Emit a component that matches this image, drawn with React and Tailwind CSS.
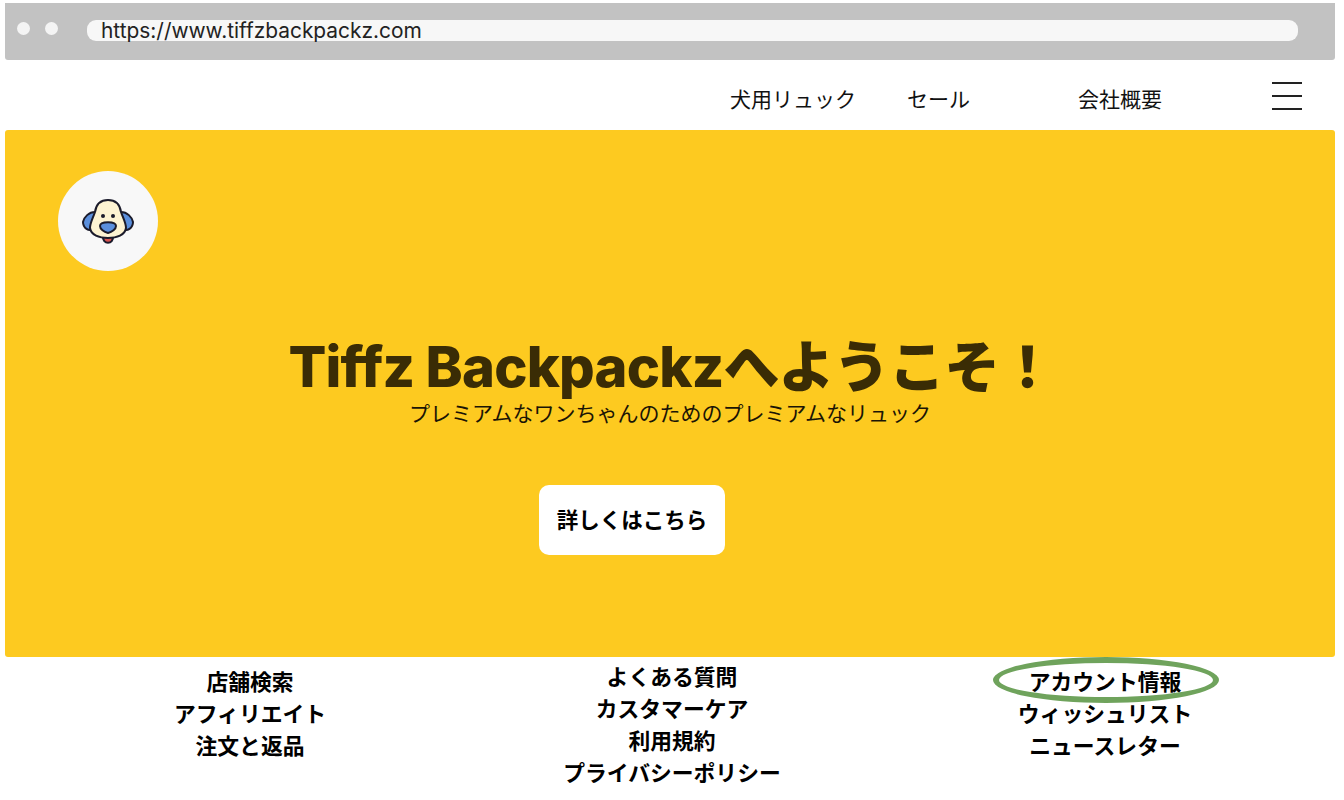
const footerColumns = [
  { width: "ml-[100px]", top: "pt-[9px]", links: ["店舗検索", "アフィリエイト", "注文と返品"] },
  { width: "ml-[122px]", top: "pt-[4px]", links: ["よくある質問", "カスタマーケア", "利用規約", "プライバシーポリシー"] },
  { width: "ml-[133px]", top: "pt-[9px]", links: ["アカウント情報", "ウィッシュリスト", "ニュースレター"], circled: true },
];

function DogLogo() {
  return (
    <svg width="60" height="60" viewBox="0 0 60 60" fill="none" stroke="#1b1b2b" strokeWidth="2" strokeLinejoin="round">
      <path d="M17 21C11 21 6 26 5 31C5 37 11 41 15 38C17 33 18 27 20 23Z" fill="#5b8fdc" />
      <path d="M43 21C49 21 54 26 55 31C55 37 49 41 45 38C43 33 42 27 40 23Z" fill="#5b8fdc" />
      <path d="M25 45C24 54 36 54 35 45Z" fill="#d9534f" />
      <path d="M30 9C22 9 18 14 17 21C15 27 12 32 12 37C13 44 21 47 30 47C39 47 47 44 48 37C48 32 45 27 43 21C42 14 38 9 30 9Z" fill="#fdf3d2" />
      <path d="M22 35C22 30 38 30 38 35C38 38 34 41 30 42C26 41 22 38 22 35Z" fill="#5b8fdc" />
      <circle cx="25" cy="25" r="2" fill="#1b1b2b" stroke="none" />
      <circle cx="35" cy="25" r="2" fill="#1b1b2b" stroke="none" />
    </svg>
  );
}

export default function App() {
  return (
    <div className="w-[1344px] h-[800px] overflow-hidden bg-white px-[5px] pt-[3px] font-['Inter','Noto_Sans_CJK_JP',sans-serif]">
      {/* browser chrome */}
      <div className="flex items-center h-[57px] w-[1330px] rounded-b-[3px] bg-[#c2c2c2] pb-[2px]">
        <div className="ml-[12px] w-[13px] h-[13px] rounded-full bg-[#f4f4f4] -mt-[5px]"></div>
        <div className="ml-[15px] w-[13px] h-[13px] rounded-full bg-[#f4f4f4] -mt-[5px]"></div>
        <div className="ml-[29px] flex items-center w-[1211px] h-[21px] rounded-[9px] bg-[#f7f7f7] pl-[14px] text-[20.9px] text-[#222222]">
          https://www.tiffzbackpackz.com
        </div>
      </div>

      {/* nav */}
      <nav className="flex items-center h-[70px] w-[1330px] text-[21px] leading-none text-[#111111] pt-[9px]">
        <a className="ml-[725px]">犬用リュック</a>
        <a className="ml-[51px]">セール</a>
        <a className="ml-[108px]">会社概要</a>
        <button className="ml-[110px] flex flex-col gap-[11px] w-[30px] -mt-[7px]">
          <span className="block h-[2px] bg-[#222222]"></span>
          <span className="block h-[2px] bg-[#222222]"></span>
          <span className="block h-[2px] bg-[#222222]"></span>
        </button>
      </nav>

      {/* hero */}
      <section className="h-[527px] w-[1330px] rounded-[3px] bg-[#fdca20] pt-[41px]">
        <div className="ml-[53px] flex items-center justify-center w-[100px] h-[100px] rounded-full bg-[#f8f8f8]">
          <DogLogo />
        </div>
        <h1 className="mt-[66px] ml-[3px] text-center text-[56px] leading-[60px] font-extrabold tracking-[-0.8px] text-[#3a2c05]">
          Tiffz Backpackzへようこそ！
        </h1>
        <p className="mt-[2px] text-center text-[21px] leading-[30px] text-[#1a1405]">
          プレミアムなワンちゃんのためのプレミアムなリュック
        </p>
        <button className="mt-[56px] ml-[534px] flex items-center justify-center w-[186px] h-[70px] rounded-[10px] bg-white text-[21.5px] font-bold text-[#000000]">
          詳しくはこちら
        </button>
      </section>

      {/* footer links */}
      <footer className="flex -ml-[5px] text-[21.8px] font-bold leading-[32px] text-[#000000]">
        {footerColumns.map((col) => (
          <ul key={col.links[0]} className={`w-[300px] text-center ${col.width} ${col.top}`}>
            {col.links.map((link, i) => (
              <li key={link} className="relative">
                {link}
                {col.circled && i === 0 && (
                  <span className="absolute left-[38px] top-[-9px] w-[226px] h-[46px] rounded-[50%] border-[6px] border-[#6fa35c]"></span>
                )}
              </li>
            ))}
          </ul>
        ))}
      </footer>
    </div>
  );
}
